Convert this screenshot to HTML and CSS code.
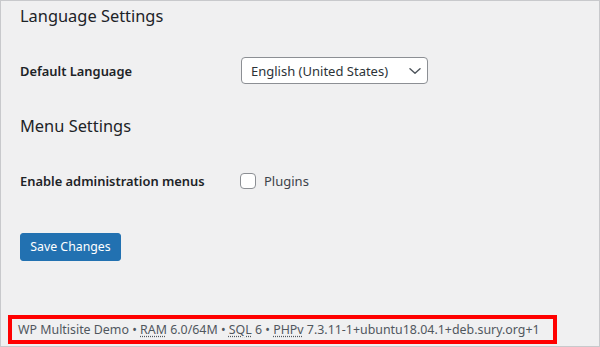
FILE: index.html
```html
<!DOCTYPE html>
<html lang="en">
<head>
<meta charset="utf-8">
<title>Network Settings</title>
<link rel="stylesheet" href="styles.css">
</head>
<body>
<div class="frame">
  <div class="content">
    <h2 class="section-title first">Language Settings</h2>
    <div class="form-row row-select">
      <div class="row-label">Default Language</div>
      <div class="select">
        <span class="select-text">English (United States)</span>
        <svg class="chevron" width="12" height="8" viewBox="0 0 12 8" aria-hidden="true"><polyline points="1,1.8 6,6.2 11,1.8" fill="none" stroke="#50575e" stroke-width="1.5" stroke-linecap="round" stroke-linejoin="round"/></svg>
      </div>
    </div>
    <h2 class="section-title second">Menu Settings</h2>
    <div class="form-row row-check">
      <div class="row-label label-check">Enable administration menus</div>
      <label class="check-label"><span class="checkbox"></span>Plugins</label>
    </div>
    <button class="button-primary" type="button">Save Changes</button>
  </div>
  <div class="footer">WP Multisite Demo • <abbr title="Memory">RAM</abbr> 6.0/64M • <abbr title="Queries">SQL</abbr> 6 • <abbr title="PHP version">PHPv</abbr> 7.3.11-1+ubuntu18.04.1+deb.sury.org+1</div>
</div>
</body>
</html>
```

FILE: styles.css
```css
html, body {
  margin: 0;
  padding: 0;
}
body {
  font-family: "Noto Sans", "Open Sans", sans-serif;
  color: #1d2327;
  background: #f0f0f1;
}
.frame {
  width: 600px;
  height: 347px;
  box-sizing: border-box;
  border: 1px solid #c8c9cc;
  background: #f0f0f1;
  overflow: hidden;
}
.content {
  padding-left: 19px;
  display: flex;
  flex-direction: column;
  align-items: flex-start;
}
.section-title {
  margin: 0;
  font-size: 16.4px;
  font-weight: 400;
  line-height: 24px;
  color: #1d2327;
}
.section-title.first {
  margin-top: 3px;
}
.section-title.second {
  margin-top: 30px;
}
.form-row {
  display: flex;
  align-items: center;
}
.row-select {
  margin-top: 29px;
  height: 27px;
}
.row-check {
  margin-top: 35px;
  height: 16px;
}
.row-label {
  width: 221px;
  font-size: 12.9px;
  font-weight: 600;
  color: #1d2327;
}
.row-label.label-check {
  width: 220px;
}
.select {
  width: 187px;
  height: 27px;
  box-sizing: border-box;
  border: 1px solid #8c8f94;
  border-radius: 4px;
  background: #fff;
  display: flex;
  align-items: center;
  justify-content: space-between;
  padding: 0 6px 0 9px;
  font-size: 13px;
  color: #2c3338;
}
.chevron {
  display: block;
}
.check-label {
  display: flex;
  align-items: center;
  gap: 8px;
  font-size: 13px;
  color: #3c434a;
}
.checkbox {
  width: 16px;
  height: 16px;
  box-sizing: border-box;
  border: 1px solid #8c8f94;
  border-radius: 4px;
  background: #fff;
}
.button-primary {
  margin-top: 44px;
  height: 28px;
  width: 101px;
  padding: 0;
  border: 1px solid #2271b1;
  border-radius: 3px;
  background: #2271b1;
  color: #fff;
  font-family: inherit;
  font-size: 12.3px;
  line-height: 26px;
}
.footer {
  margin: 54px 0 0 7px;
  width: 549px;
  height: 29px;
  box-sizing: border-box;
  border: 4px solid #ff0000;
  padding-left: 6px;
  font-size: 12.4px;
  line-height: 21px;
  color: #50575e;
  white-space: nowrap;
}
abbr {
  text-decoration: underline dotted;
  text-underline-offset: 2px;
}
```
